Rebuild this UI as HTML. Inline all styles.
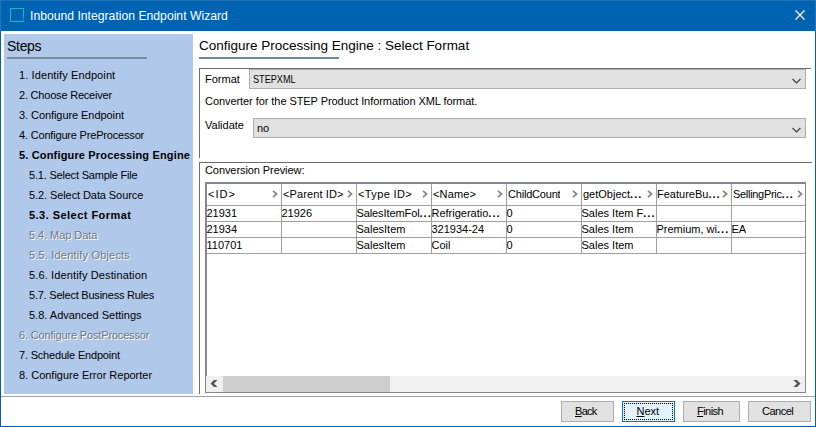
<!DOCTYPE html>
<html><head><meta charset="utf-8">
<style>
*{margin:0;padding:0;box-sizing:border-box}
html,body{width:816px;height:427px;overflow:hidden;background:#fff}
body{position:relative;font-family:"Liberation Sans",sans-serif;font-size:11px;color:#000}
.a{position:absolute}
.t{position:absolute;white-space:nowrap;line-height:13px}
#title{left:0;top:0;width:816px;height:31px;background:#0063b1}
#frameL{left:0;top:31px;width:1px;height:396px;background:#0063b1}
#frameR{left:815px;top:31px;width:1px;height:396px;background:#0063b1}
#frameB{left:0;top:426px;width:816px;height:1px;background:#0063b1}
#panel{left:4px;top:34px;width:189px;height:360px;background:#b0c8ea}
.step{position:absolute;white-space:nowrap;line-height:13px;left:19px}
.sub{left:29px}
.b{font-weight:bold}
.dis{color:#73777e;text-shadow:1px 1px 0 #fff}
.hline{position:absolute;height:1px;background:#6d6d6d}
.vline{position:absolute;width:1px;background:#6d6d6d}
.combo{position:absolute;background:#e1e1e1;border:1px solid #adadad;height:20px}
.chev{position:absolute}
.btn{position:absolute;top:401px;height:21px;background:#e1e1e1;border:1px solid #adadad;text-align:center;line-height:19px}
.grid{position:absolute;background:#a0a0a0}
.cell{position:absolute;white-space:nowrap;line-height:13px;overflow:hidden}
</style></head><body>
<div id="title" class="a"></div>
<svg class="a" style="left:10px;top:8px" width="14" height="14" viewBox="0 0 14 14" shape-rendering="crispEdges" fill="#1db5c3"><rect x="0" y="0" width="14" height="1"/><rect x="0" y="0" width="1" height="14"/><rect x="0" y="13" width="14" height="1"/><rect x="13" y="0" width="1" height="10"/><rect x="13" y="11" width="1" height="1"/></svg>
<div class="t" style="left:30px;top:9px;font-size:12.2px;line-height:15px;color:#fff">Inbound Integration Endpoint Wizard</div>
<svg class="a" style="left:795px;top:10px" width="10" height="10" viewBox="0 0 10 10"><path d="M0.5 0.5L9.5 9.5M9.5 0.5L0.5 9.5" stroke="#fff" stroke-width="1.2"/></svg>
<div class="a" style="left:0;top:0;width:816px;height:1px;background:#2373b8"></div><div class="a" style="left:0;top:0;width:1px;height:31px;background:#2373b8"></div><div class="a" style="left:815px;top:0;width:1px;height:31px;background:#2373b8"></div>
<div id="frameL" class="a"></div><div id="frameR" class="a"></div><div id="frameB" class="a"></div>

<div id="panel" class="a"></div>
<div class="t" style="left:7px;top:38px;font-size:14px;line-height:16px;letter-spacing:-0.3px">Steps</div>
<div class="a" style="left:7px;top:57px;width:140px;height:2px;background:#7d8ca2"></div>

<div class="step" style="top:69px;letter-spacing:0.105px">1. Identify Endpoint</div>
<div class="step" style="top:89px;letter-spacing:-0.206px">2. Choose Receiver</div>
<div class="step" style="top:109px;letter-spacing:-0.070px">3. Configure Endpoint</div>
<div class="step" style="top:129px;letter-spacing:-0.183px">4. Configure PreProcessor</div>
<div class="step b" style="top:149px;letter-spacing:0.162px">5. Configure Processing Engine</div>
<div class="step sub" style="top:169px;letter-spacing:-0.200px">5.1. Select Sample File</div>
<div class="step sub" style="top:189px;letter-spacing:-0.086px">5.2. Select Data Source</div>
<div class="step sub b" style="top:209px;letter-spacing:0.459px">5.3. Select Format</div>
<div class="step sub dis" style="top:229px;letter-spacing:-0.067px">5.4. Map Data</div>
<div class="step sub dis" style="top:249px;letter-spacing:0.180px">5.5. Identify Objects</div>
<div class="step sub" style="top:269px;letter-spacing:0.129px">5.6. Identify Destination</div>
<div class="step sub" style="top:289px;letter-spacing:-0.224px">5.7. Select Business Rules</div>
<div class="step sub" style="top:309px;letter-spacing:0.000px">5.8. Advanced Settings</div>
<div class="step dis" style="top:329px;letter-spacing:-0.164px">6. Configure PostProcessor</div>
<div class="step" style="top:349px;letter-spacing:-0.189px">7. Schedule Endpoint</div>
<div class="step" style="top:369px;letter-spacing:-0.008px">8. Configure Error Reporter</div>

<!-- right content -->
<div class="t" style="left:199px;top:38px;font-size:13.5px;line-height:16px">Configure Processing Engine : Select Format</div>
<div class="a" style="left:199px;top:57px;width:140px;height:2px;background:#6f86a6"></div>

<div class="hline" style="left:199px;top:68px;width:612px"></div>
<div class="vline" style="left:199px;top:68px;height:90px"></div>
<div class="t" style="left:205px;top:73px">Format</div>
<div class="combo" style="left:249px;top:69px;width:557px"></div>
<div class="t" style="left:253px;top:73px;transform:scaleX(0.83);transform-origin:0 0">STEPXML</div>
<svg class="a" style="left:791px;top:78px" width="11" height="6" viewBox="0 0 11 6"><path d="M1.5 1L5.5 5L9.5 1" fill="none" stroke="#404040" stroke-width="1.2"/></svg>
<div class="t" style="left:205px;top:95px;letter-spacing:-0.065px">Converter for the STEP Product Information XML format.</div>
<div class="t" style="left:205px;top:119px">Validate</div>
<div class="combo" style="left:253px;top:118px;width:553px"></div>
<div class="t" style="left:257px;top:122px">no</div>
<svg class="a" style="left:791px;top:127px" width="11" height="6" viewBox="0 0 11 6"><path d="M1.5 1L5.5 5L9.5 1" fill="none" stroke="#404040" stroke-width="1.2"/></svg>

<div class="hline" style="left:199px;top:162px;width:613px"></div>
<div class="vline" style="left:199px;top:162px;height:232px"></div>
<div class="t" style="left:205px;top:164px;letter-spacing:-0.08px">Conversion Preview:</div>

<!-- table -->
<div class="a" style="left:205px;top:182px;width:601px;height:211px;border:1px solid #828790;background:#fff"></div>
<div class="a" style="left:206px;top:183px;width:599px;height:1px;background:#828790"></div>
<div class="a" style="left:206px;top:183px;width:1px;height:193px;background:#828790"></div>
<div class="grid" style="left:207px;top:205px;width:598px;height:1px"></div>
<div class="grid" style="left:207px;top:221px;width:598px;height:1px"></div>
<div class="grid" style="left:207px;top:237px;width:598px;height:1px"></div>
<div class="grid" style="left:207px;top:253px;width:598px;height:1px"></div>
<div class="grid" style="left:281px;top:184px;width:1px;height:70px"></div>
<div class="grid" style="left:356px;top:184px;width:1px;height:70px"></div>
<div class="grid" style="left:431px;top:184px;width:1px;height:70px"></div>
<div class="grid" style="left:506px;top:184px;width:1px;height:70px"></div>
<div class="grid" style="left:581px;top:184px;width:1px;height:70px"></div>
<div class="grid" style="left:656px;top:184px;width:1px;height:70px"></div>
<div class="grid" style="left:731px;top:184px;width:1px;height:70px"></div>
<div class="cell" style="left:208px;top:188px;letter-spacing:1.0px">&lt;ID&gt;</div>
<svg class="a" style="left:272px;top:190px" width="6" height="8" viewBox="0 0 6 8"><path d="M1 0.8L4.6 4L1 7.2" fill="none" stroke="#858585" stroke-width="1.7"/></svg>
<div class="cell" style="left:283px;top:188px;letter-spacing:0.12px">&lt;Parent ID&gt;</div>
<svg class="a" style="left:347px;top:190px" width="6" height="8" viewBox="0 0 6 8"><path d="M1 0.8L4.6 4L1 7.2" fill="none" stroke="#858585" stroke-width="1.7"/></svg>
<div class="cell" style="left:358px;top:188px;letter-spacing:0.37px">&lt;Type ID&gt;</div>
<svg class="a" style="left:422px;top:190px" width="6" height="8" viewBox="0 0 6 8"><path d="M1 0.8L4.6 4L1 7.2" fill="none" stroke="#858585" stroke-width="1.7"/></svg>
<div class="cell" style="left:433px;top:188px;letter-spacing:0.15px">&lt;Name&gt;</div>
<svg class="a" style="left:497px;top:190px" width="6" height="8" viewBox="0 0 6 8"><path d="M1 0.8L4.6 4L1 7.2" fill="none" stroke="#858585" stroke-width="1.7"/></svg>
<div class="cell" style="left:508px;top:188px;letter-spacing:-0.2px">ChildCount</div>
<svg class="a" style="left:572px;top:190px" width="6" height="8" viewBox="0 0 6 8"><path d="M1 0.8L4.6 4L1 7.2" fill="none" stroke="#858585" stroke-width="1.7"/></svg>
<div class="cell" style="left:583px;top:188px;letter-spacing:0.0px">getObject<span style="letter-spacing:1px;font-weight:bold">..</span><b>.</b></div>
<svg class="a" style="left:647px;top:190px" width="6" height="8" viewBox="0 0 6 8"><path d="M1 0.8L4.6 4L1 7.2" fill="none" stroke="#858585" stroke-width="1.7"/></svg>
<div class="cell" style="left:657px;top:188px;letter-spacing:0.0px">FeatureBu<span style="letter-spacing:1px;font-weight:bold">..</span><b>.</b></div>
<svg class="a" style="left:722px;top:190px" width="6" height="8" viewBox="0 0 6 8"><path d="M1 0.8L4.6 4L1 7.2" fill="none" stroke="#858585" stroke-width="1.7"/></svg>
<div class="cell" style="left:733px;top:188px;letter-spacing:-0.3px">SellingPric<span style="letter-spacing:1px;font-weight:bold">..</span><b>.</b></div>
<svg class="a" style="left:797px;top:190px" width="6" height="8" viewBox="0 0 6 8"><path d="M1 0.8L4.6 4L1 7.2" fill="none" stroke="#858585" stroke-width="1.7"/></svg>
<div class="cell" style="left:206.5px;top:207px">21931</div>
<div class="cell" style="left:281.5px;top:207px">21926</div>
<div class="cell" style="left:356.5px;top:207px"><span style="letter-spacing:-0.1px">SalesItemFol</span><span style="letter-spacing:1px;font-weight:bold">..</span><b>.</b></div>
<div class="cell" style="left:431.5px;top:207px">Refrigeratio<span style="letter-spacing:1px;font-weight:bold">..</span><b>.</b></div>
<div class="cell" style="left:506.5px;top:207px">0</div>
<div class="cell" style="left:581.5px;top:207px">Sales Item F<span style="letter-spacing:1px;font-weight:bold">..</span><b>.</b></div>
<div class="cell" style="left:206.5px;top:223px">21934</div>
<div class="cell" style="left:356.5px;top:223px">SalesItem</div>
<div class="cell" style="left:431.5px;top:223px">321934-24</div>
<div class="cell" style="left:506.5px;top:223px">0</div>
<div class="cell" style="left:581.5px;top:223px">Sales Item</div>
<div class="cell" style="left:656.5px;top:223px">Premium, wi<span style="letter-spacing:1px;font-weight:bold">..</span><b>.</b></div>
<div class="cell" style="left:731.5px;top:223px">EA</div>
<div class="cell" style="left:206.5px;top:239px">110701</div>
<div class="cell" style="left:356.5px;top:239px">SalesItem</div>
<div class="cell" style="left:431.5px;top:239px">Coil</div>
<div class="cell" style="left:506.5px;top:239px">0</div>
<div class="cell" style="left:581.5px;top:239px">Sales Item</div>
<div class="a" style="left:206px;top:376px;width:599px;height:16px;background:#f0f0f0"></div>
<div class="a" style="left:223px;top:376px;width:167px;height:16px;background:#cdcdcd"></div>
<svg class="a" style="left:206px;top:374px" width="20" height="18" viewBox="206 374 20 18"><path d="M214 380H217.5L214 383.5L217.5 387H214L210.5 383.5Z" fill="#555"/></svg>
<svg class="a" style="left:786px;top:374px" width="20" height="18" viewBox="786 374 20 18"><path d="M793.5 380H797L800.5 383.5L797 387H793.5L797 383.5Z" fill="#555"/></svg>
<div class="separator hline" style="left:1px;top:396px;width:814px;background:#a0a0a0"></div>

<div class="btn" style="left:561px;width:53px"></div>
<div class="t" style="left:575px;top:405px;letter-spacing:-0.7px"><u>B</u>ack</div>
<div class="btn" style="left:622px;width:53px;border-color:#0078d7;background:#e5f1fb"></div>
<div class="a" style="left:624px;top:403px;width:49px;height:17px;border:1px dotted #000"></div>
<div class="t" style="left:636.5px;top:405px"><u>N</u>ext</div>
<div class="btn" style="left:683px;width:57px"></div>
<div class="t" style="left:697px;top:405px;letter-spacing:-0.55px"><u>F</u>inish</div>
<div class="btn" style="left:748px;width:63px"></div>
<div class="t" style="left:762px;top:405px;letter-spacing:-0.49px">Cancel</div>
</body></html>
